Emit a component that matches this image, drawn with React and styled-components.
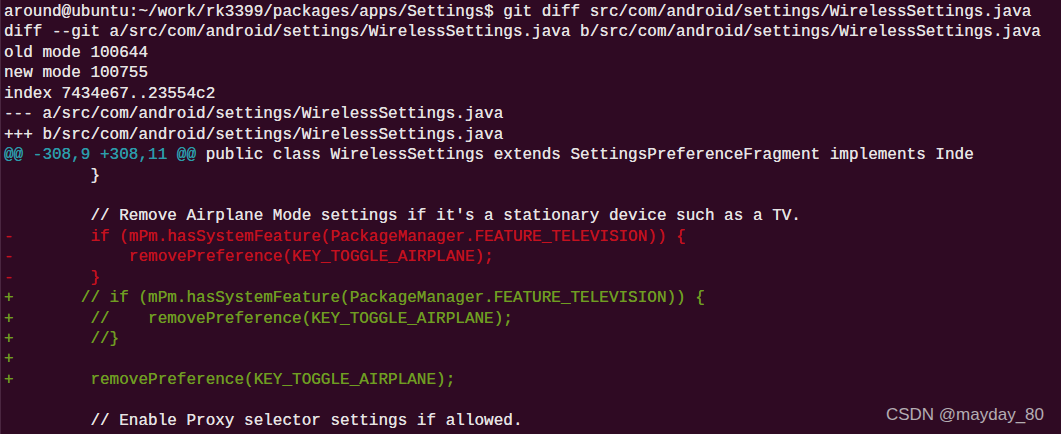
import styled, { createGlobalStyle } from 'styled-components';

const GlobalStyle = createGlobalStyle`
	html, body {
		margin: 0;
		padding: 0;
		background: #2f0a23;
		overflow: hidden;
	}
`;

// farby terminalu
const tones = {
	plain: '#e6e3e3',
	hunk: '#2c9cab',
	del: '#c4111f',
	add: '#6f9d22',
};

const Terminal = styled.div`
	position: relative;
	width: 1061px;
	height: 434px;
	box-sizing: border-box;
	padding: 2px 0 0 3px;
	background: #2f0a23;
	border-left: 1px solid #4a2640;
	font-family: 'Courier New', 'Nimbus Mono PS', 'Nimbus Mono L', FreeMono, 'Liberation Mono', monospace;
	font-size: 16px;
	overflow: hidden;
`;

const Line = styled.div`
	height: 20.45px;
	line-height: 20.45px;
	white-space: pre;
	color: ${(p) => tones[p.$tone || 'plain']};
	text-shadow: 0 0 0.4px currentColor;
`;

const Seg = styled.span`
	color: ${(p) => tones[p.$tone]};
`;

const Watermark = styled.div`
	position: absolute;
	right: 17px;
	bottom: 11px;
	font-family: 'Liberation Sans', Arial, sans-serif;
	font-size: 17px;
	line-height: 1;
	color: #b4adb2;
`;

const lines = [
	{ text: 'around@ubuntu:~/work/rk3399/packages/apps/Settings$ git diff src/com/android/settings/WirelessSettings.java' },
	{ text: 'diff --git a/src/com/android/settings/WirelessSettings.java b/src/com/android/settings/WirelessSettings.java' },
	{ text: 'old mode 100644' },
	{ text: 'new mode 100755' },
	{ text: 'index 7434e67..23554c2' },
	{ text: '--- a/src/com/android/settings/WirelessSettings.java' },
	{ text: '+++ b/src/com/android/settings/WirelessSettings.java' },
	{ hunk: '@@ -308,9 +308,11 @@', text: ' public class WirelessSettings extends SettingsPreferenceFragment implements Inde' },
	{ text: '         }' },
	{ text: ' ' },
	{ text: "         // Remove Airplane Mode settings if it's a stationary device such as a TV." },
	{ tone: 'del', text: '-        if (mPm.hasSystemFeature(PackageManager.FEATURE_TELEVISION)) {' },
	{ tone: 'del', text: '-            removePreference(KEY_TOGGLE_AIRPLANE);' },
	{ tone: 'del', text: '-        }' },
	{ tone: 'add', text: '+       // if (mPm.hasSystemFeature(PackageManager.FEATURE_TELEVISION)) {' },
	{ tone: 'add', text: '+        //    removePreference(KEY_TOGGLE_AIRPLANE);' },
	{ tone: 'add', text: '+        //}' },
	{ tone: 'add', text: '+' },
	{ tone: 'add', text: '+        removePreference(KEY_TOGGLE_AIRPLANE);' },
	{ text: ' ' },
	{ text: '         // Enable Proxy selector settings if allowed.' },
];

export default function App() {
	return (
		<>
			<GlobalStyle />
			<Terminal>
				{lines.map((l, i) => (
					<Line key={i} $tone={l.tone}>
						{l.hunk && <Seg $tone="hunk">{l.hunk}</Seg>}
						{l.text}
					</Line>
				))}
				<Watermark>CSDN @mayday_80</Watermark>
			</Terminal>
		</>
	);
}
